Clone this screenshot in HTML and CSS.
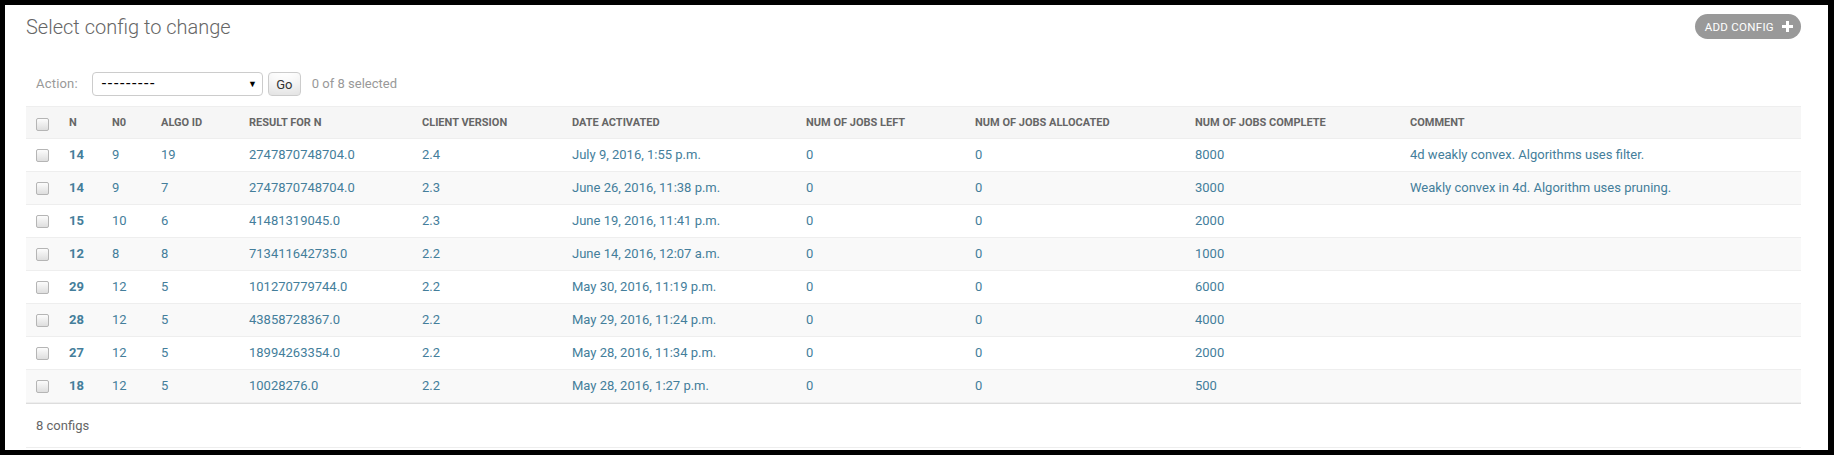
FILE: index.html
```html
<!DOCTYPE html>
<html>
<head>
<meta charset="utf-8">
<title>Select config to change</title>
<link rel="stylesheet" href="styles.css">
</head>
<body>
<div class="frame">
  <div class="page-head">
    <h1>Select config to change</h1>
    <a class="addlink" href="#">Add config
      <svg class="plus" width="11" height="11" viewBox="0 0 11 11"><rect x="4" y="0" width="3" height="11" fill="#fff"/><rect x="0" y="4" width="11" height="3" fill="#fff"/></svg>
    </a>
  </div>
  <div class="actions">
    <span class="label">Action:</span>
    <div class="select"><span class="dashes">---------</span><span class="arrow">&#9660;</span></div>
    <button class="go">Go</button>
    <span class="counter">0 of 8 selected</span>
  </div>
  <table class="results">
    <colgroup>
      <col class="c0"><col class="c1"><col class="c2"><col class="c3"><col class="c4"><col class="c5"><col class="c6"><col class="c7"><col class="c8"><col class="c9"><col class="c10">
    </colgroup>
    <thead>
      <tr>
        <th class="cb"><span class="box"></span></th>
        <th>N</th><th>N0</th><th>Algo ID</th><th>Result for N</th><th>Client version</th><th>Date activated</th><th>Num of jobs left</th><th>Num of jobs allocated</th><th>Num of jobs complete</th><th>Comment</th>
      </tr>
    </thead>
    <tbody>
      <tr class="row1"><td class="cb"><span class="box"></span></td><th><a href="#">14</a></th><td><a href="#">9</a></td><td><a href="#">19</a></td><td><a href="#">2747870748704.0</a></td><td><a href="#">2.4</a></td><td><a href="#">July 9, 2016, 1:55 p.m.</a></td><td><a href="#">0</a></td><td><a href="#">0</a></td><td><a href="#">8000</a></td><td><a href="#">4d weakly convex. Algorithms uses filter.</a></td></tr>
      <tr class="row2"><td class="cb"><span class="box"></span></td><th><a href="#">14</a></th><td><a href="#">9</a></td><td><a href="#">7</a></td><td><a href="#">2747870748704.0</a></td><td><a href="#">2.3</a></td><td><a href="#">June 26, 2016, 11:38 p.m.</a></td><td><a href="#">0</a></td><td><a href="#">0</a></td><td><a href="#">3000</a></td><td><a href="#">Weakly convex in 4d. Algorithm uses pruning.</a></td></tr>
      <tr class="row1"><td class="cb"><span class="box"></span></td><th><a href="#">15</a></th><td><a href="#">10</a></td><td><a href="#">6</a></td><td><a href="#">41481319045.0</a></td><td><a href="#">2.3</a></td><td><a href="#">June 19, 2016, 11:41 p.m.</a></td><td><a href="#">0</a></td><td><a href="#">0</a></td><td><a href="#">2000</a></td><td></td></tr>
      <tr class="row2"><td class="cb"><span class="box"></span></td><th><a href="#">12</a></th><td><a href="#">8</a></td><td><a href="#">8</a></td><td><a href="#">713411642735.0</a></td><td><a href="#">2.2</a></td><td><a href="#">June 14, 2016, 12:07 a.m.</a></td><td><a href="#">0</a></td><td><a href="#">0</a></td><td><a href="#">1000</a></td><td></td></tr>
      <tr class="row1"><td class="cb"><span class="box"></span></td><th><a href="#">29</a></th><td><a href="#">12</a></td><td><a href="#">5</a></td><td><a href="#">101270779744.0</a></td><td><a href="#">2.2</a></td><td><a href="#">May 30, 2016, 11:19 p.m.</a></td><td><a href="#">0</a></td><td><a href="#">0</a></td><td><a href="#">6000</a></td><td></td></tr>
      <tr class="row2"><td class="cb"><span class="box"></span></td><th><a href="#">28</a></th><td><a href="#">12</a></td><td><a href="#">5</a></td><td><a href="#">43858728367.0</a></td><td><a href="#">2.2</a></td><td><a href="#">May 29, 2016, 11:24 p.m.</a></td><td><a href="#">0</a></td><td><a href="#">0</a></td><td><a href="#">4000</a></td><td></td></tr>
      <tr class="row1"><td class="cb"><span class="box"></span></td><th><a href="#">27</a></th><td><a href="#">12</a></td><td><a href="#">5</a></td><td><a href="#">18994263354.0</a></td><td><a href="#">2.2</a></td><td><a href="#">May 28, 2016, 11:34 p.m.</a></td><td><a href="#">0</a></td><td><a href="#">0</a></td><td><a href="#">2000</a></td><td></td></tr>
      <tr class="row2"><td class="cb"><span class="box"></span></td><th><a href="#">18</a></th><td><a href="#">12</a></td><td><a href="#">5</a></td><td><a href="#">10028276.0</a></td><td><a href="#">2.2</a></td><td><a href="#">May 28, 2016, 1:27 p.m.</a></td><td><a href="#">0</a></td><td><a href="#">0</a></td><td><a href="#">500</a></td><td></td></tr>
    </tbody>
  </table>
  <p class="paginator">8 configs</p>
</div>
</body>
</html>
```
FILE: styles.css
```css
html, body {
  margin: 0;
  padding: 0;
  background: #000;
}
body {
  font-family: Roboto, "Liberation Sans", sans-serif;
  font-size: 14px;
  color: #333;
}
.frame {
  margin: 5px 6px 5px 5px;
  height: 445px;
  background: #fff;
  box-sizing: border-box;
  padding: 11px 27px 0 21px;
}
.page-head {
  display: flex;
  justify-content: space-between;
  align-items: flex-start;
  margin-bottom: 23px;
}
h1 {
  margin: 0;
  font-size: 20px;
  line-height: 23px;
  font-weight: 300;
  color: #666;
}
.addlink {
  display: flex;
  align-items: center;
  height: 25px;
  margin-top: -2px;
  box-sizing: border-box;
  padding: 0 8px 0 10px;
  gap: 8px;
  border-radius: 13px;
  background: #999;
  color: #fff;
  font-size: 11.5px;
  letter-spacing: 0.3px;
  text-transform: uppercase;
  text-decoration: none;
}
.plus { display: block; }
.actions {
  display: flex;
  align-items: center;
  padding: 10px;
  height: 24px;
  line-height: 24px;
  color: #999;
  font-size: 13px;
}
.label {
  letter-spacing: 0.2px;
}
.select {
  display: flex;
  justify-content: space-between;
  align-items: center;
  width: 171px;
  height: 24px;
  box-sizing: border-box;
  margin-left: 14px;
  padding: 0 5px 0 9px;
  border: 1px solid #ccc;
  border-radius: 4px;
  color: #000;
}
.dashes {
  font-size: 16px;
  letter-spacing: 1.6px;
}
.arrow {
  font-size: 9px;
  color: #000;
}
.go {
  margin-left: 5px;
  width: 33px;
  height: 24px;
  padding: 0;
  font-family: inherit;
  font-size: 13px;
  color: #333;
  border: 1px solid #ccc;
  border-radius: 4px;
  background: #fff;
  box-shadow: 0 -15px 20px -10px rgba(0,0,0,0.15) inset;
}
.counter {
  margin-left: 11px;
}
.results {
  width: 1775px;
  table-layout: fixed;
  border-collapse: collapse;
}
.c0 { width: 35px; }
.c1 { width: 43px; }
.c2 { width: 49px; }
.c3 { width: 88px; }
.c4 { width: 173px; }
.c5 { width: 150px; }
.c6 { width: 234px; }
.c7 { width: 169px; }
.c8 { width: 220px; }
.c9 { width: 215px; }
.results th, .results td {
  padding: 8px;
  font-size: 13px;
  line-height: 16px;
  text-align: left;
  vertical-align: top;
  border-bottom: 1px solid #eee;
  white-space: nowrap;
}
.results thead th {
  padding: 8px 8px 7px;
  font-size: 11px;
  font-weight: 700;
  text-transform: uppercase;
  color: #666;
  background: #f6f6f6;
  border-top: 1px solid #eee;
  vertical-align: middle;
}
.results tbody th { font-weight: 700; }
.results .cb {
  padding-left: 10px;
  padding-right: 0;
}
.box {
  display: block;
  width: 13px;
  height: 13px;
  margin-top: 2px;
  box-sizing: border-box;
  border: 1px solid #b5b5b5;
  border-radius: 2px;
  background: linear-gradient(#fcfcfc, #dedede);
}
.results a {
  color: #447e9b;
  text-decoration: none;
}
.row1 { background: #fff; }
.row2 { background: #f9f9f9; }
.paginator {
  margin: 0;
  padding: 11px 10px 10px;
  line-height: 22px;
  font-size: 13px;
  color: #666;
  border-top: 1px solid #ddd;
  border-bottom: 1px solid #eee;
}
```
